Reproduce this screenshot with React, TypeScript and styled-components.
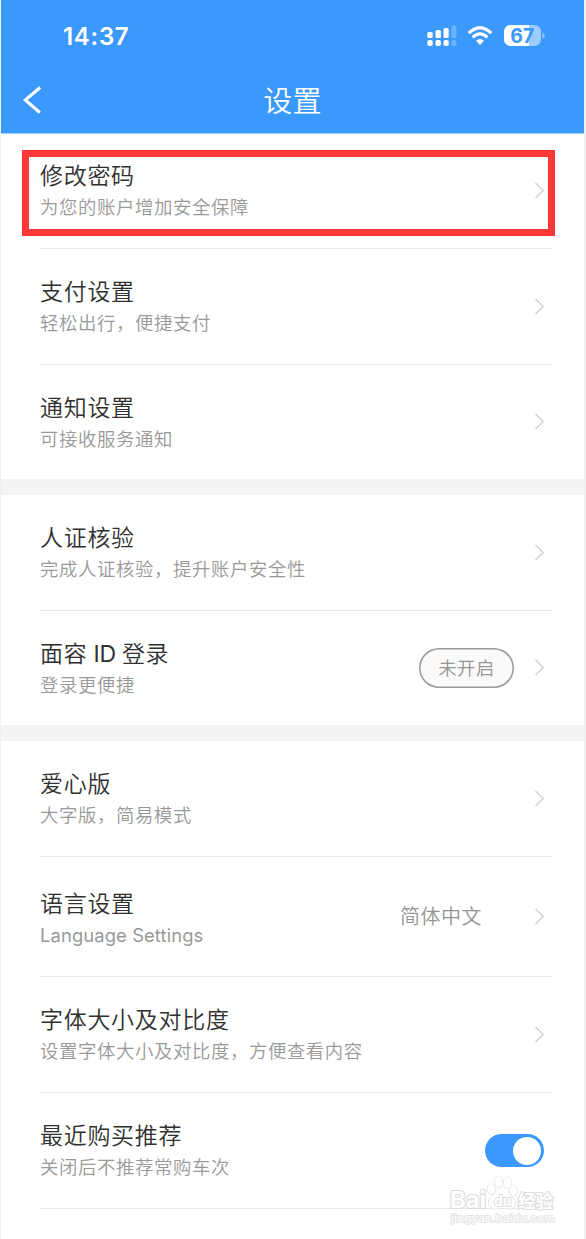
import React from 'react';
import styled, { createGlobalStyle } from 'styled-components';

const BLUE = '#3c99fc';

const GlobalStyle = createGlobalStyle`
  * { box-sizing: border-box; }
  body {
    margin: 0;
    background: #fff;
    font-family: Inter, 'Noto Sans CJK SC', sans-serif;
  }
`;

const Screen = styled.div`
  position: relative;
  width: 586px;
  height: 1239px;
  overflow: hidden;
  border-left: 1px solid #f0f0f0;
  border-right: 2px solid #f0f0f0;
  background: #fff;
`;

const Header = styled.header`
  height: 134px;
  background: ${BLUE};
  border-bottom: 1px solid #a0cefd;
  color: #fff;
`;

const StatusBar = styled.div`
  display: flex;
  align-items: center;
  justify-content: space-between;
  height: 72px;
  padding: 0 38px 0 62px;
`;

const Clock = styled.span`
  font-size: 24px;
  font-weight: 600;
  letter-spacing: 0.7px;
`;

const StatusIcons = styled.svg`
  display: block;
  width: 120px;
  height: 24px;
`;

const NavBar = styled.div`
  display: grid;
  grid-template-columns: 60px 1fr 60px;
  align-items: center;
  height: 56px;
`;

const BackIcon = styled.svg`
  width: 20px;
  height: 28px;
  margin-left: 21px;
`;

const NavTitle = styled.h1`
  margin: 0;
  padding-top: 4px;
  text-align: center;
  font-size: 29px;
  font-weight: 350;
  line-height: 40px;
  letter-spacing: 0.3px;
`;

const Section = styled.section`
  padding: 0 31px 0 39px;
  font-weight: 350;
  & + & { border-top: 16px solid #f4f4f4; }
`;

const Row = styled.div<{ $height: number; $line: boolean }>`
  display: flex;
  align-items: center;
  height: ${(p) => p.$height}px;
  border-bottom: ${(p) => (p.$line ? '1px solid #e8e8e8' : '0')};
`;

const Texts = styled.div<{ $drop: number }>`
  flex: 1;
  padding-top: ${(p) => p.$drop}px;
`;

const Title = styled.div`
  height: 32px;
  font-size: 23px;
  line-height: 34px;
  letter-spacing: 0.7px;
  color: #303030;
  white-space: nowrap;
`;

const Latin = styled.span`
  font-weight: 400;
  letter-spacing: -0.3px;
`;

const Subtitle = styled.div`
  height: 32px;
  font-size: 18.4px;
  line-height: 32px;
  letter-spacing: 0.6px;
  color: #999;
  white-space: nowrap;
  ${Latin} { letter-spacing: 0.1px; }
`;

const Value = styled.span`
  margin-right: 52px;
  padding-bottom: 2px;
  font-size: 20px;
  letter-spacing: 0.5px;
  color: #949494;
`;

const Pill = styled.span`
  display: flex;
  align-items: center;
  justify-content: center;
  width: 95px;
  height: 40px;
  margin-right: 20px;
  padding-bottom: 2px;
  box-shadow: inset 0 0 0 1.5px #999;
  border-radius: 20px;
  background: #fafafa;
  color: #949494;
  font-size: 18.4px;
  letter-spacing: 0.4px;
`;

const ArrowIcon = styled.svg`
  width: 11px;
  height: 18px;
  margin-right: 8px;
`;

const Switch = styled.span`
  display: flex;
  align-items: center;
  justify-content: flex-end;
  width: 59px;
  height: 33px;
  margin-right: 9px;
  padding-right: 3px;
  border-radius: 17px;
  background: ${BLUE};
`;

const Knob = styled.span`
  width: 28px;
  height: 28px;
  border-radius: 50%;
  background: #fff;
`;

const Highlight = styled.div`
  position: absolute;
  left: 21px;
  top: 150px;
  width: 533px;
  height: 86px;
  border: 7px solid #fc3838;
`;

const Watermark = styled.svg`
  position: absolute;
  left: 444px;
  top: 1172px;
  width: 114px;
  height: 56px;
`;

const Arrow = () => (
  <ArrowIcon viewBox="0 0 11 18" fill="none" stroke="#d2d2d2" strokeWidth="1.5">
    <path d="M1.5 1 9.2 8.5 1.5 16" />
  </ArrowIcon>
);

type Item = {
  title: React.ReactNode;
  sub: React.ReactNode;
  height?: number;
  drop?: number;
  value?: string;
  pill?: string;
  toggle?: boolean;
};

const sections: Item[][] = [
  [
    { title: '修改密码', sub: '为您的账户增加安全保障', height: 115, drop: 0 },
    { title: '支付设置', sub: '轻松出行，便捷支付' },
    { title: '通知设置', sub: '可接收服务通知', height: 114, drop: 2 },
  ],
  [
    { title: '人证核验', sub: '完成人证核验，提升账户安全性' },
    { title: <>面容<Latin> ID </Latin>登录</>, sub: '登录更便捷', height: 114, drop: 2, pill: '未开启' },
  ],
  [
    { title: '爱心版', sub: '大字版，简易模式' },
    { title: '语言设置', sub: <Latin>Language Settings</Latin>, height: 120, drop: 5, value: '简体中文' },
    { title: '字体大小及对比度', sub: '设置字体大小及对比度，方便查看内容' },
    { title: '最近购买推荐', sub: '关闭后不推荐常购车次', toggle: true },
  ],
];

export default function App() {
  return (
    <Screen>
      <GlobalStyle />
      <Header>
        <StatusBar>
          <Clock>14:37</Clock>
          <StatusIcons viewBox="0 0 120 24" fill="#fff">
            <rect x="1.3" y="8" width="5.4" height="6" rx="1.6" />
            <rect x="9.5" y="6" width="5.4" height="8" rx="1.6" />
            <rect x="17.5" y="4" width="5.2" height="10" rx="1.6" />
            <rect x="25.5" y="1.5" width="5" height="12.5" rx="1.6" opacity="0.25" />
            <rect x="1.3" y="16" width="5.4" height="6" rx="1.8" />
            <rect x="9.5" y="16" width="5.4" height="6" rx="1.8" />
            <rect x="17.5" y="16" width="5.2" height="6" rx="1.8" />
            <rect x="25.5" y="16" width="5" height="6" rx="1.8" opacity="0.25" />
            <g fill="none" stroke="#fff" strokeWidth="3.2">
              <path d="M42.7 9.2Q54 -1.8 65.3 9.2" />
              <path d="M46.6 13.4Q54 6.4 61.4 13.4" />
            </g>
            <path d="M50 16.8Q54 13 58 16.8L54 21Z" />
            <rect x="78" y="1" width="37" height="21" rx="6.5" opacity="0.5" />
            <path d="M84.5 1H103V22H84.5A6.5 6.5 0 0 1 78 15.5V7.5A6.5 6.5 0 0 1 84.5 1Z" />
            <path d="M116.5 8.5Q118.7 9.5 118.7 11.5T116.5 14.5Z" opacity="0.5" />
            <text x="96.3" y="18.8" textAnchor="middle" fontSize="19.5" fontWeight="700" fill={BLUE}>
              67
            </text>
          </StatusIcons>
        </StatusBar>
        <NavBar>
          <BackIcon viewBox="0 0 20 28" fill="none" stroke="#fff" strokeWidth="3">
            <path d="M18.2 1.5 3.2 14 17.8 26.5" />
          </BackIcon>
          <NavTitle>设置</NavTitle>
        </NavBar>
      </Header>
      {sections.map((items, s) => (
        <Section key={s}>
          {items.map((item, i) => (
            <Row
              key={i}
              $height={item.height ?? 116}
              $line={s === sections.length - 1 || i < items.length - 1}
            >
              <Texts $drop={item.drop ?? 1}>
                <Title>{item.title}</Title>
                <Subtitle>{item.sub}</Subtitle>
              </Texts>
              {item.value && <Value>{item.value}</Value>}
              {item.pill && <Pill>{item.pill}</Pill>}
              {item.toggle ? (
                <Switch>
                  <Knob />
                </Switch>
              ) : (
                <Arrow />
              )}
            </Row>
          ))}
        </Section>
      ))}
      <Highlight />
      <Watermark viewBox="0 0 114 56">
        <g fill="#fff" stroke="#dedede" strokeWidth="1.2" paintOrder="stroke">
          <g strokeWidth="2.2" fontWeight="700">
            <text x="5" y="36" fontSize="23" textLength="36" lengthAdjust="spacingAndGlyphs">Bai</text>
            <text x="73" y="35.5" fontSize="18" textLength="35" lengthAdjust="spacingAndGlyphs">经验</text>
          </g>
          <ellipse cx="46.5" cy="17" rx="4" ry="5" />
          <ellipse cx="53.5" cy="9.5" rx="4" ry="5.5" />
          <ellipse cx="62.5" cy="10.5" rx="4" ry="5.5" />
          <ellipse cx="68.5" cy="19" rx="4" ry="5" />
          <path d="M57 16C51 16 50 22 46 25.5C41 31 45 37.5 51 36.5Q57 35.5 63 36.5C70 37.5 73 31 68 26C64 22 63 16 57 16Z" />
          <text x="49" y="33.5" fontSize="14" fontWeight="700" strokeWidth="1.8">du</text>
          <text x="6" y="50" fontSize="10.5" stroke="#e2e2e2" strokeWidth="1.5" textLength="104" lengthAdjust="spacingAndGlyphs">
            jingyan.baidu.com
          </text>
        </g>
      </Watermark>
    </Screen>
  );
}
